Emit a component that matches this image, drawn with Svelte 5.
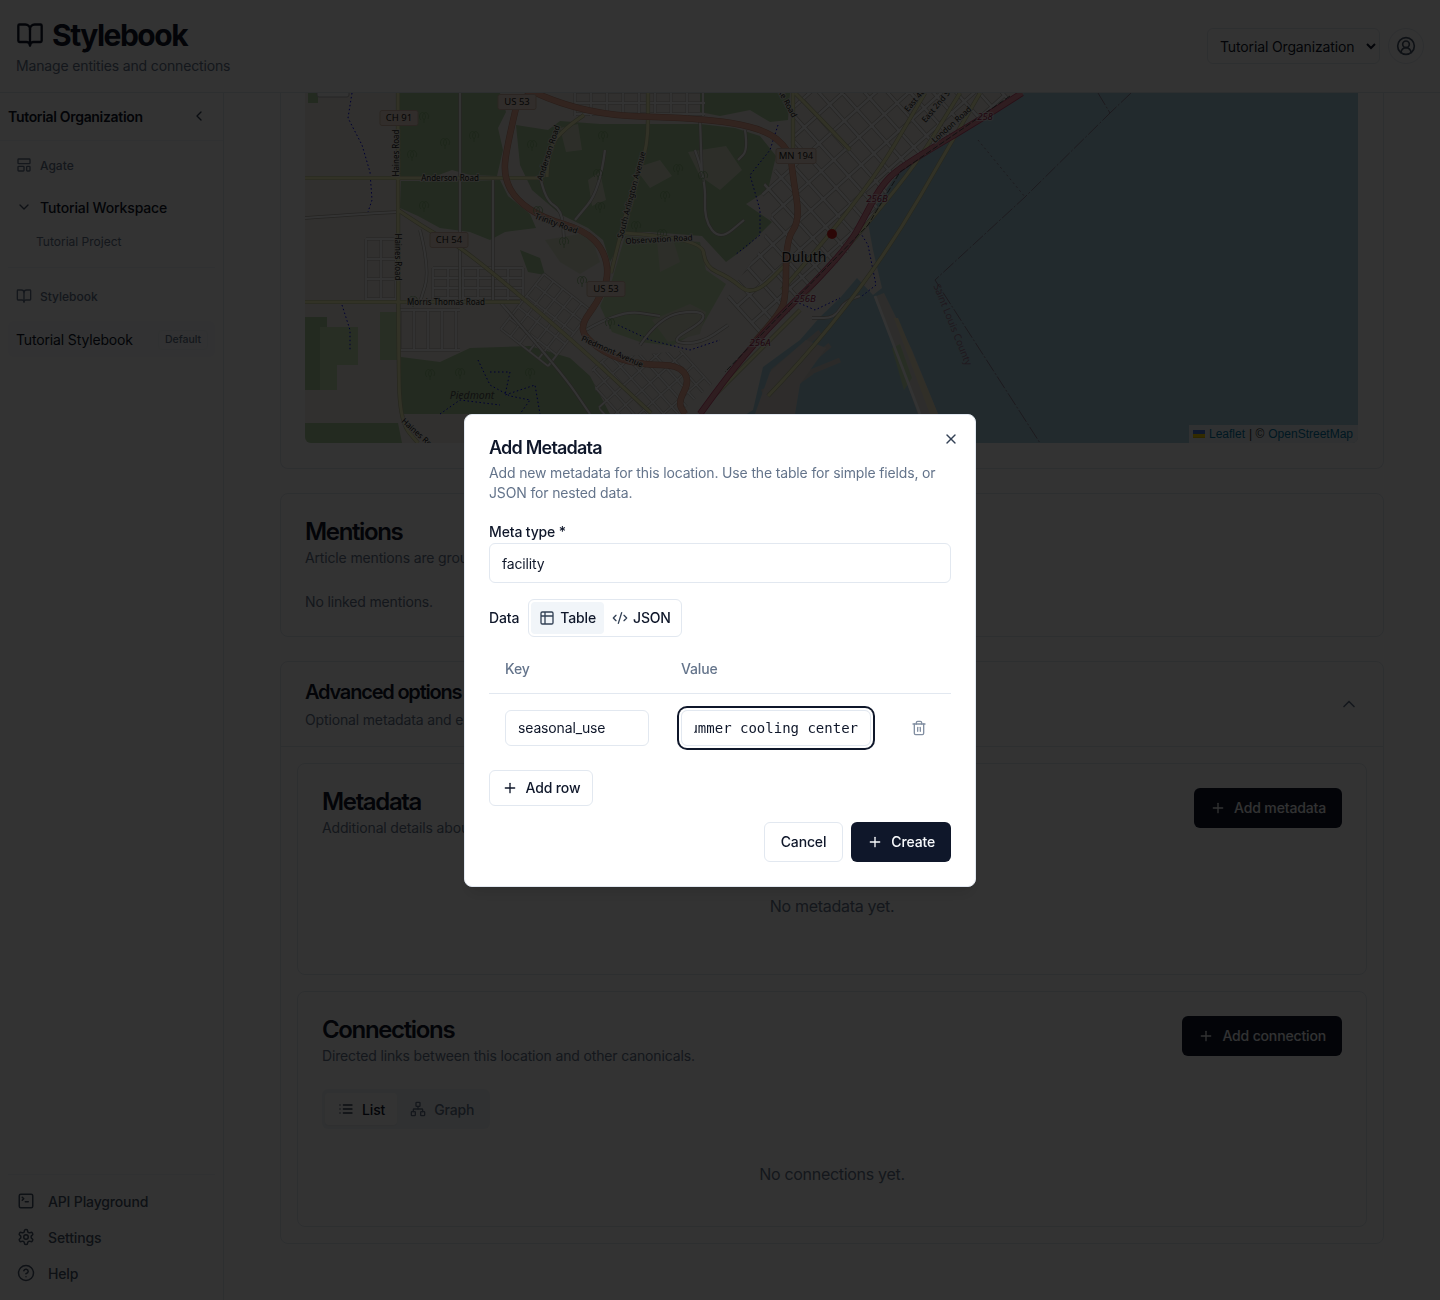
<script>
  import { onMount } from 'svelte';

  const ICONS = {
    book: ['M12 7v14', 'M3 18a1 1 0 0 1-1-1V4a1 1 0 0 1 1-1h5a4 4 0 0 1 4 4 4 4 0 0 1 4-4h5a1 1 0 0 1 1 1v13a1 1 0 0 1-1 1h-6a3 3 0 0 0-3 3 3 3 0 0 0-3-3z'],
    layout: ['M4 3h16a1 1 0 0 1 1 1v5a1 1 0 0 1-1 1H4a1 1 0 0 1-1-1V4a1 1 0 0 1 1-1z', 'M4 14h7a1 1 0 0 1 1 1v5a1 1 0 0 1-1 1H4a1 1 0 0 1-1-1v-5a1 1 0 0 1 1-1z', 'M17 14h3a1 1 0 0 1 1 1v5a1 1 0 0 1-1 1h-3a1 1 0 0 1-1-1v-5a1 1 0 0 1 1-1z'],
    left: ['m15 18-6-6 6-6'],
    down: ['m6 9 6 6 6-6'],
    up: ['m18 15-6-6-6 6'],
    table: ['M9 3H5a2 2 0 0 0-2 2v4m6-6h10a2 2 0 0 1 2 2v4M9 3v18m0 0h10a2 2 0 0 0 2-2V9M9 21H5a2 2 0 0 1-2-2V9m0 0h18'],
    code: ['m18 16 4-4-4-4', 'm6 8-4 4 4 4', 'm14.5 4-5 16'],
    trash: ['M3 6h18', 'M19 6v14c0 1-1 2-2 2H7c-1 0-2-1-2-2V6', 'M8 6V4c0-1 1-2 2-2h4c1 0 2 1 2 2v2', 'M10 11v6', 'M14 11v6'],
    plus: ['M5 12h14', 'M12 5v14'],
    x: ['M18 6 6 18', 'm6 6 12 12'],
    terminal: ['m7 11 2-2-2-2', 'M11 13h4', 'M5 3h14a2 2 0 0 1 2 2v14a2 2 0 0 1-2 2H5a2 2 0 0 1-2-2V5a2 2 0 0 1 2-2z'],
    gear: ['M12.22 2h-.44a2 2 0 0 0-2 2v.18a2 2 0 0 1-1 1.73l-.43.25a2 2 0 0 1-2 0l-.15-.08a2 2 0 0 0-2.73.73l-.22.38a2 2 0 0 0 .73 2.73l.15.1a2 2 0 0 1 1 1.72v.51a2 2 0 0 1-1 1.74l-.15.09a2 2 0 0 0-.73 2.73l.22.38a2 2 0 0 0 2.73.73l.15-.08a2 2 0 0 1 2 0l.43.25a2 2 0 0 1 1 1.73V20a2 2 0 0 0 2 2h.44a2 2 0 0 0 2-2v-.18a2 2 0 0 1 1-1.73l.43-.25a2 2 0 0 1 2 0l.15.08a2 2 0 0 0 2.73-.73l.22-.39a2 2 0 0 0-.73-2.73l-.15-.08a2 2 0 0 1-1-1.74v-.5a2 2 0 0 1 1-1.74l.15-.09a2 2 0 0 0 .73-2.73l-.22-.38a2 2 0 0 0-2.73-.73l-.15.08a2 2 0 0 1-2 0l-.43-.25a2 2 0 0 1-1-1.73V4a2 2 0 0 0-2-2z', 'M12 9a3 3 0 1 0 0 6 3 3 0 0 0 0-6z'],
    help: ['M12 2a10 10 0 1 0 0 20 10 10 0 0 0 0-20z', 'M9.09 9a3 3 0 0 1 5.83 1c0 2-3 3-3 3', 'M12 17h.01'],
    list: ['M3 12h.01', 'M3 18h.01', 'M3 6h.01', 'M8 12h13', 'M8 18h13', 'M8 6h13'],
    network: ['M17 16h4a1 1 0 0 1 1 1v4a1 1 0 0 1-1 1h-4a1 1 0 0 1-1-1v-4a1 1 0 0 1 1-1z', 'M3 16h4a1 1 0 0 1 1 1v4a1 1 0 0 1-1 1H3a1 1 0 0 1-1-1v-4a1 1 0 0 1 1-1z', 'M10 2h4a1 1 0 0 1 1 1v4a1 1 0 0 1-1 1h-4a1 1 0 0 1-1-1V3a1 1 0 0 1 1-1z', 'M5 16v-3a1 1 0 0 1 1-1h12a1 1 0 0 1 1 1v3', 'M12 12V8'],
    user: ['M18 20a6 6 0 0 0-12 0', 'M12 6a4 4 0 1 0 0 8 4 4 0 0 0 0-8z', 'M12 2a10 10 0 1 0 0 20 10 10 0 0 0 0-20z']
  };

  // rounds a list of points into a road line
  function smooth(pts) {
    let d = `M${pts[0][0]} ${pts[0][1]}`;
    for (let i = 1; i < pts.length - 1; i++) {
      const mx = (pts[i][0] + pts[i + 1][0]) / 2;
      const my = (pts[i][1] + pts[i + 1][1]) / 2;
      d += ` Q${pts[i][0]} ${pts[i][1]} ${mx} ${my}`;
    }
    const last = pts[pts.length - 1];
    return d + ` L${last[0]} ${last[1]}`;
  }

  // block of streets, turned by angle around its centre
  function grid(cx, cy, angle, w, h, sx, sy) {
    const a = (angle * Math.PI) / 180;
    const p = (x, y) => `${(cx + x * Math.cos(a) - y * Math.sin(a)).toFixed(1)} ${(cy + x * Math.sin(a) + y * Math.cos(a)).toFixed(1)}`;
    let d = '';
    for (let x = -w / 2; x <= w / 2; x += sx) d += `M${p(x, -h / 2)}L${p(x, h / 2)}`;
    for (let y = -h / 2; y <= h / 2; y += sy) d += `M${p(-w / 2, y)}L${p(w / 2, y)}`;
    return d;
  }

  const forests = [
    'M400 93L500 93 506 112 498 128 503 150 497 176 470 175 452 170 436 176 400 176Z',
    'M401 181L470 181 500 180 508 196 530 214 536 228 505 232 490 240 470 232 440 228 418 216 400 208Z',
    'M516 125L548 130 560 121 600 124 650 124 700 124 735 128 760 136 776 156 768 190 746 204 772 222 748 246 726 262 702 236 650 232 626 232 610 262 603 240 588 228 560 214 532 190 520 165Z',
    'M401 357L440 362 470 348 530 346 570 358 590 376 610 414 401 414Z',
    'M305 423L398 423 402 443 305 443Z',
    'M305 317L327 317 327 390 305 390Z',
    'M308 93L318 93 318 103 308 103Z',
    'M700 93L790 93 788 120 770 122 750 110 720 116 700 112Z',
    'M520 250L540 258 545 275 528 272Z'
  ];
  const parks = [
    'M625 236L700 242 706 270 726 284 700 330 672 346 640 342 612 332 600 306 612 280Z',
    'M320 327L358 327 358 365 337 365 337 390 320 390Z',
    'M380 312L398 312 398 360 380 360Z'
  ];

  const clearings = [
    'M657 240L672 236 680 262 660 272Z',
    'M635 168L660 160 672 176 650 188Z',
    'M560 128L578 124 582 150 566 152Z',
    'M688 152L726 146 742 170 720 190 700 176Z',
    'M652 320L690 304 706 312 700 334 668 342Z',
    'M588 180L600 172 606 200 592 206Z',
    'M545 240L590 232 600 262 580 274 560 262Z'
  ];

  const blocks = [
    { d: grid(870, 200, -42, 340, 240, 17, 22), clip: 'url(#city)' },
    { d: grid(640, 104, 0, 130, 24, 16, 11), thin: true },
    { d: grid(381, 270, 0, 30, 62, 15, 20), thin: true },
    { d: grid(478, 285, 0, 90, 34, 15, 10), thin: true },
    { d: grid(546, 320, 38, 60, 70, 12, 14), thin: true },
    { d: grid(640, 388, -42, 110, 90, 11, 16), clip: 'url(#south)', thin: true },
    { d: grid(430, 330, 0, 60, 40, 14, 40), thin: true }
  ];

  const minor = [
    [[305, 218], [360, 214], [398, 212]],
    [[305, 178], [398, 178]],
    [[460, 93], [460, 300]],
    [[493, 178], [493, 302]],
    [[605, 150], [600, 190], [575, 220]],
    [[695, 150], [706, 180], [704, 220], [720, 240], [744, 220]],
    [[700, 118], [702, 178]],
    [[640, 345], [660, 316], [700, 310], [706, 320], [668, 342], [700, 344], [728, 325]],
    [[586, 330], [620, 310], [660, 316]],
    [[540, 176], [545, 200], [562, 210], [564, 240]],
    [[745, 130], [748, 150], [738, 160]],
    [[420, 230], [430, 270], [420, 302]],
    [[500, 302], [560, 370], [590, 414]],
    [[860, 296], [845, 300], [835, 318], [812, 318]]
  ];
  const tertiary = [
    [[398, 93], [398, 363], [401, 423], [418, 443]],
    [[305, 178], [543, 178]],
    [[305, 302], [520, 302]],
    [[398, 210], [432, 233], [462, 247], [570, 338], [651, 413]],
    [[624, 233], [702, 238], [705, 267], [729, 277], [753, 297], [790, 260]],
    [[611, 273], [621, 233], [634, 183], [648, 147], [648, 93]],
    [[547, 177], [548, 147], [567, 127], [584, 115]],
    [[793, 93], [793, 150]],
    [[768, 396], [860, 300], [980, 93]],
    [[800, 300], [900, 190], [960, 93]],
    [[782, 290], [865, 195], [925, 93]],
    [[795, 93], [820, 118], [850, 150]],
    [[710, 400], [800, 310]]
  ];
  const trunk = [
    [[536, 93], [584, 115], [699, 118], [763, 128], [790, 150], [793, 177], [800, 220], [786, 240], [786, 297], [780, 313], [752, 345]],
    [[516, 108], [506, 150], [504, 177], [516, 200], [543, 218], [584, 230], [604, 250], [609, 277], [597, 303], [582, 323], [584, 337], [611, 357], [645, 365], [678, 365], [690, 380], [678, 403], [685, 414]],
    [[516, 108], [524, 96], [536, 93]]
  ];
  const motorway = [[[1022, 93], [980, 120], [900, 167], [880, 187], [863, 220], [850, 243], [820, 277], [793, 303], [760, 337], [727, 377], [700, 414]]];

  const streams = [
    'M352 93L348 118 362 145 370 172 372 200 368 212',
    'M342 305L350 330 350 350',
    'M778 125L770 150 750 175 760 210 760 235 735 255',
    'M478 360L490 385 510 396 530 400 520 414',
    'M440 414L460 400 500 405',
    'M490 372L510 372 505 395 535 385 540 414',
    'M618 325L650 340 690 350 720 340',
    'M860 232L868 245 876 285 862 296',
    'M792 300L815 310 840 298'
  ];

  const trees = [
    [424, 116], [445, 142], [474, 135], [412, 154], [424, 205], [532, 144], [538, 210], [598, 173], [600, 206], [564, 241], [603, 135],
    [665, 195], [678, 168], [636, 225], [703, 175], [662, 233], [413, 300], [430, 373], [460, 372], [530, 372], [610, 322], [582, 280]
  ];

  const shields = [
    { x: 399, y: 118, w: 38, t: 'CH 91' },
    { x: 517, y: 102, w: 38, t: 'US 53' },
    { x: 449, y: 240, w: 38, t: 'CH 54' },
    { x: 606, y: 289, w: 38, t: 'US 53' },
    { x: 796, y: 156, w: 40, t: 'MN 194' }
  ];

  const labels = [
    { t: 'Haines Road', x: 397, y: 153, r: -90 },
    { t: 'Haines Road', x: 397, y: 257, r: 90 },
    { t: 'Anderson Road', x: 450, y: 179 },
    { t: 'Anderson Road', x: 549, y: 153, r: -72 },
    { t: 'Morris Thomas Road', x: 446, y: 303 },
    { t: 'Trinity Road', x: 556, y: 224, r: 20 },
    { t: 'South Arlington Avenue', x: 632, y: 195, r: -75 },
    { t: 'Observation Road', x: 659, y: 240, r: -3 },
    { t: 'Piedmont Avenue', x: 612, y: 352, r: 24 },
    { t: 'Haines Road', x: 420, y: 436, r: 42 },
    { t: 'London Road', x: 952, y: 125, r: -42 },
    { t: 'East 4th Street', x: 924, y: 90, r: -50 },
    { t: 'East 2nd Street', x: 942, y: 100, r: -50 },
    { t: 'Lake Road', x: 785, y: 100, r: 62 }
  ];
  const exits = [
    { t: '258', x: 985, y: 117 },
    { t: '256B', x: 877, y: 199 },
    { t: '256B', x: 805, y: 299 },
    { t: '256A', x: 760, y: 343 }
  ];

  let valueInput = $state();
  let metaType = $state('facility');
  let keyValue = $state('seasonal_use');
  let valueValue = $state('Summer cooling center');
  let org = $state('Tutorial Organization');

  onMount(() => {
    // long value sits scrolled to its end, as after typing
    valueInput.scrollLeft = valueInput.scrollWidth;
  });
</script>

{#snippet icon(name, size = 16)}
  <svg class="icon" width={size} height={size} viewBox="0 0 24 24" fill="none" stroke="currentColor" stroke-width="2" stroke-linecap="round" stroke-linejoin="round">
    {#each ICONS[name] as d}<path {d} />{/each}
  </svg>
{/snippet}

<div class="page">
  <header class="top">
    <div>
      <div class="brand">
        {@render icon('book', 28)}
        <h1>Stylebook</h1>
      </div>
      <p class="tagline">Manage entities and connections</p>
    </div>
    <div class="top-right">
      <select class="org-select" bind:value={org}>
        <option>Tutorial Organization</option>
      </select>
      <button class="avatar">{@render icon('user', 20)}</button>
    </div>
  </header>

  <div class="body">
    <aside class="side">
      <div class="side-head">
        <span>Tutorial Organization</span>
        <span class="collapse">{@render icon('left', 16)}</span>
      </div>
      <div class="side-nav">
        <div class="side-label first">{@render icon('layout', 16)}<span>Agate</span></div>
        <div class="workspace">{@render icon('down', 16)}<span>Tutorial Workspace</span></div>
        <div class="project">Tutorial Project</div>
        <div class="rule"></div>
        <div class="side-label second">{@render icon('book', 16)}<span>Stylebook</span></div>
        <div class="current">
          <span>Tutorial Stylebook</span>
          <span class="badge">Default</span>
        </div>
      </div>
      <div class="side-foot">
        <div class="foot-link">{@render icon('terminal', 18)}<span>API Playground</span></div>
        <div class="foot-link">{@render icon('gear', 18)}<span>Settings</span></div>
        <div class="foot-link">{@render icon('help', 18)}<span>Help</span></div>
      </div>
    </aside>

    <main class="main">
      <section class="card map-card">
        <div class="map">
          <svg class="tiles" viewBox="305 93 1053 350" width="1053" height="350">
            <defs>
              <clipPath id="city"><path d="M796 93L1024 93 900 170 866 225 850 250 790 312 752 345 700 414 660 414 700 345 735 285 760 250 772 215 760 190 790 150Z" /></clipPath>
              <clipPath id="south"><path d="M590 360L690 350 720 380 680 414 600 414Z" /></clipPath>
            </defs>
            <rect x="305" y="93" width="1053" height="350" fill="#f2efe9" />
            <rect x="305" y="423" width="93" height="2" fill="#e4e0d8" />
            {#each forests as d}<path {d} class="forest" />{/each}
            {#each parks as d}<path {d} class="park" />{/each}
            {#each clearings as d}<path {d} class="clearing" />{/each}
            <path class="water" d="M1024 93L1358 93 1358 443 700 443 753 410 763 367 800 340 820 317 840 298 857 278 873 295 882 288 873 250 868 223 880 198 900 170 925 152 960 130 1000 106Z" />
            <path class="pier" d="M772 372L820 332M784 384L830 345M762 392L840 360M770 402L812 372" />
            <path class="dock" d="M755 414L770 372 806 340 826 348 800 384 795 414Z" />
            <path class="strip" d="M874 297L884 293 912 350 938 414 918 414 895 350Z" />
            <path class="sand" d="M894 318L898 318 938 414 930 414Z" />
            <path class="park" d="M892 348L900 344 912 378 904 390Z" />

            {#each blocks as b}
              <g clip-path={b.clip} class:thin={b.thin}>
                <path d={b.d} class="street-case" />
                <path d={b.d} class="street" />
              </g>
            {/each}
            <path class="street" d="M875 296L920 414" />

            {#each streams as d}<path {d} class="stream" />{/each}
            {#each minor as pts}<path d={smooth(pts)} class="minor-case" />{/each}
            {#each minor as pts}<path d={smooth(pts)} class="minor" />{/each}
            {#each tertiary as pts}<path d={smooth(pts)} class="tert-case" />{/each}
            {#each tertiary as pts}<path d={smooth(pts)} class="tert" />{/each}
            {#each trunk as pts}<path d={smooth(pts)} class="trunk-case" />{/each}
            {#each trunk as pts}<path d={smooth(pts)} class="trunk" />{/each}
            {#each motorway as pts}<path d={smooth(pts)} class="moto-case" />{/each}
            {#each motorway as pts}<path d={smooth(pts)} class="moto" />{/each}
            <path class="rail" d="M1010 96L900 172 868 225 790 305 725 372" />

            <path class="boundary" d="M1098 93L1110 113 1025 197 935 280 1040 443M1131 93L1110 113" />
            <path class="boundary dotted" d="M978 140L1025 197" />

            {#each trees as [x, y]}
              <path class="tree" d="M{x - 3} {y + 4}a3 4 0 1 1 3 0v3m0-3a3 4 0 1 1 4 -1" />
            {/each}

            {#each labels as l}
              <text class="road-label" x={l.x} y={l.y} text-anchor="middle" dominant-baseline="middle" transform={l.r ? `rotate(${l.r} ${l.x} ${l.y})` : undefined}>{l.t}</text>
            {/each}
            {#each exits as l}
              <text class="exit" x={l.x} y={l.y} text-anchor="middle" dominant-baseline="middle">{l.t}</text>
            {/each}
            {#each shields as s}
              <rect class="shield" x={s.x - s.w / 2} y={s.y - 7.5} width={s.w} height="15" rx="2" />
              <text class="shield-text" x={s.x} y={s.y} text-anchor="middle" dominant-baseline="middle">{s.t}</text>
            {/each}
            <text class="place" x="804" y="258" text-anchor="middle" dominant-baseline="middle">Duluth</text>
            <text class="suburb" x="472" y="396" text-anchor="middle" dominant-baseline="middle">Piedmont</text>
            <text class="county" x="952" y="325" text-anchor="middle" dominant-baseline="middle" transform="rotate(68 952 325)">Saint Louis County</text>
            <rect x="317" y="88" width="32" height="9" rx="2" class="zoom-box" />
            <circle cx="832" cy="234" r="5" class="marker" />
          </svg>
          <div class="attribution">
            <svg width="12" height="8" viewBox="0 0 12 8"><rect width="12" height="4" fill="#4C7BE1" /><rect y="4" width="12" height="3" fill="#FFD500" /><rect y="7" width="12" height="1" fill="#E0BC00" /></svg>
            <span class="link">Leaflet</span> | © <span class="link">OpenStreetMap</span>
          </div>
        </div>
      </section>

      <section class="card plain">
        <h2>Mentions</h2>
        <p class="muted">Article mentions are grouped by article and linked to this location.</p>
        <p class="muted none">No linked mentions.</p>
      </section>

      <section class="card advanced">
        <div class="adv-head">
          <div>
            <h3>Advanced options</h3>
            <p class="muted">Optional metadata and entity connections.</p>
          </div>
          <span class="adv-toggle">{@render icon('up', 20)}</span>
        </div>
        <div class="adv-body">
          <div class="inner meta-inner">
            <div class="inner-head">
              <div>
                <h2>Metadata</h2>
                <p class="muted">Additional details about this location.</p>
              </div>
              <button class="btn primary">{@render icon('plus', 16)}<span>Add metadata</span></button>
            </div>
            <p class="empty meta-empty">No metadata yet.</p>
          </div>
          <div class="inner conn-inner">
            <div class="inner-head">
              <div>
                <h2>Connections</h2>
                <p class="muted">Directed links between this location and other canonicals.</p>
              </div>
              <button class="btn primary">{@render icon('plus', 16)}<span>Add connection</span></button>
            </div>
            <div class="tabs">
              <div class="tab on">{@render icon('list', 16)}<span>List</span></div>
              <div class="tab">{@render icon('network', 16)}<span>Graph</span></div>
            </div>
            <p class="empty conn-empty">No connections yet.</p>
          </div>
        </div>
      </section>
    </main>
  </div>
</div>

<div class="overlay">
  <div class="dialog">
    <button class="close">{@render icon('x', 16)}</button>
    <h4>Add Metadata</h4>
    <p class="dialog-desc">Add new metadata for this location. Use the table for simple fields, or JSON for nested data.</p>

    <label class="field-label" for="meta-type">Meta type *</label>
    <input id="meta-type" class="input wide" bind:value={metaType} />

    <div class="data-row">
      <span class="data-label">Data</span>
      <div class="switch">
        <div class="switch-item on">{@render icon('table', 16)}<span>Table</span></div>
        <div class="switch-item">{@render icon('code', 16)}<span>JSON</span></div>
      </div>
    </div>

    <div class="kv head">
      <span>Key</span>
      <span>Value</span>
      <span></span>
    </div>
    <div class="kv row">
      <div><input class="input key" bind:value={keyValue} /></div>
      <div><input class="input value" bind:this={valueInput} bind:value={valueValue} /></div>
      <button class="trash">{@render icon('trash', 16)}</button>
    </div>

    <button class="btn outline small">{@render icon('plus', 16)}<span>Add row</span></button>

    <div class="dialog-foot">
      <button class="btn outline">Cancel</button>
      <button class="btn primary create">{@render icon('plus', 16)}<span>Create</span></button>
    </div>
  </div>
</div>

<style>
  :global(body) { margin: 0; background: #fff; font-family: Inter, "Noto Sans", sans-serif; color: #0f172a; letter-spacing: -0.15px; }
  h1, h2, h3, h4, p { margin: 0; }
  button { font: inherit; letter-spacing: inherit; color: inherit; background: none; border: 0; padding: 0; }
  .icon { display: block; flex: none; }

  .page { height: 1300px; display: flex; flex-direction: column; overflow: hidden; background: #fff; }
  .top { height: 92px; flex: none; border-bottom: 1px solid #e2e8f0; padding: 0 16px; display: flex; align-items: center; justify-content: space-between; }
  .brand { display: flex; align-items: center; gap: 8px; height: 36px; }
  h1 { font-size: 30px; line-height: 36px; font-weight: 700; letter-spacing: -1.5px; }
  .tagline { font-size: 14px; line-height: 20px; color: #64748b; margin-top: 3px; }
  .top-right { display: flex; align-items: center; gap: 8px; }
  .org-select { width: 173px; height: 36px; border: 1px solid #e2e8f0; border-radius: 6px; background: #fff; padding: 0 4px 0 8px; font: 14px Inter, sans-serif; letter-spacing: -0.14px; color: #0f172a; }
  .avatar { width: 36px; height: 36px; border: 1px solid #e2e8f0; border-radius: 50%; display: flex; align-items: center; justify-content: center; color: #475569; }

  .body { flex: 1; display: flex; min-height: 0; }
  .side { width: 223px; flex: none; border-right: 1px solid #e2e8f0; display: flex; flex-direction: column; }
  .side-head { height: 48px; box-sizing: border-box; flex: none; padding: 0 16px 1px 8px; border-bottom: 1px solid #f1f5f9; display: flex; align-items: center; justify-content: space-between; font-size: 14px; font-weight: 600; letter-spacing: -0.32px; }
  .collapse { color: #334155; }
  .side-nav { padding: 0 8px; }
  .side-label { display: flex; align-items: center; gap: 8px; height: 20px; padding-left: 8px; font-size: 12px; font-weight: 500; color: #64748b; letter-spacing: 0; }
  .side-label.first { margin-top: 14px; }
  .side-label.second { margin-top: 18px; }
  .workspace { display: flex; align-items: center; gap: 8px; height: 32px; margin-top: 16px; padding-left: 8px; font-size: 14px; font-weight: 500; }
  .workspace .icon { color: #475569; }
  .project { height: 28px; line-height: 28px; margin-top: 5px; padding-left: 28px; font-size: 12px; color: #64748b; letter-spacing: 0; }
  .rule { height: 1px; background: #f1f5f9; margin-top: 11px; }
  .current { height: 36px; box-sizing: border-box; margin-top: 15px; padding: 1px 7px 0 8px; border-radius: 6px; background: #f8fafc; display: flex; align-items: center; justify-content: space-between; font-size: 14px; font-weight: 400; }
  .badge { width: 50px; height: 20px; box-sizing: border-box; border: 1px solid #f1f5f9; border-radius: 4px; text-align: center; font-size: 10.5px; line-height: 18px; font-weight: 500; color: #64748b; letter-spacing: 0; }
  .side-foot { margin: auto 8px 0; border-top: 1px solid #f1f5f9; padding: 8px 0 9px; }
  .foot-link { height: 36px; display: flex; align-items: center; gap: 13px; padding-left: 9px; font-size: 14px; font-weight: 500; color: #475569; }

  .main { flex: 1; min-width: 0; padding: 0 56px; overflow: hidden; display: flex; flex-direction: column; gap: 24px; }
  .card { border: 1px solid #e2e8f0; border-radius: 8px; background: #fff; flex: none; }
  .map-card { border-top: 0; border-radius: 0 0 8px 8px; padding: 0 25px 25px 24px; }
  .map { position: relative; height: 350px; overflow: hidden; border-radius: 0 0 6px 6px; background: #f2efe9; }
  .tiles { display: block; letter-spacing: 0; }
  .attribution { position: absolute; right: 0; bottom: 0; height: 18px; padding: 0 5px 0 4px; display: flex; align-items: center; gap: 4px; background: rgba(255, 255, 255, 0.8); font: 12px/18px "Liberation Sans", Arial, sans-serif; letter-spacing: 0; color: #333; }
  .link { color: #0078a8; }

  .forest { fill: #add19e; }
  .park { fill: #c8e6b4; }
  .clearing { fill: #dfe7cd; }
  .water { fill: #aad3df; }
  .dock { fill: #e3ddd8; }
  .strip { fill: #e6e2da; }
  .sand { fill: #f5e9c6; }
  .pier { fill: none; stroke: #d8d3cd; stroke-width: 5; }
  .street-case, .minor-case { fill: none; stroke: #b4aea6; stroke-width: 3.8; }
  .street { fill: none; stroke: #fff; stroke-width: 2.6; }
  .thin .street-case { stroke: #bdb7af; stroke-width: 2.8; }
  .thin .street { stroke-width: 1.8; }
  .minor { fill: none; stroke: #fff; stroke-width: 2.2; }
  .minor-case { stroke-width: 3.4; }
  .tert-case { fill: none; stroke: #b9ba92; stroke-width: 4.2; stroke-linejoin: round; }
  .tert { fill: none; stroke: #f7fabf; stroke-width: 3; stroke-linejoin: round; }
  .trunk-case { fill: none; stroke: #c98d76; stroke-width: 6.5; stroke-linejoin: round; }
  .trunk { fill: none; stroke: #f9b29c; stroke-width: 5.5; stroke-linejoin: round; }
  .moto-case { fill: none; stroke: #c8476f; stroke-width: 6.5; stroke-linejoin: round; }
  .moto { fill: none; stroke: #e892a2; stroke-width: 5; stroke-linejoin: round; }
  .rail { fill: none; stroke: #555; stroke-width: 1; stroke-dasharray: 6 2; }
  .stream { fill: none; stroke: #0000ff; stroke-width: 1; stroke-dasharray: 1.5 2.5; }
  .boundary { fill: none; stroke: #8f7f95; stroke-width: 1; stroke-dasharray: 14 2 2 2; }
  .boundary.dotted { stroke-dasharray: 2 3; }
  .tree { fill: none; stroke: #8cb87c; stroke-width: 0.8; }
  .road-label { font: 8px "Noto Sans", sans-serif; fill: #222; paint-order: stroke; stroke: rgba(242, 239, 233, 0.8); stroke-width: 2px; }
  .exit { font: italic 9.5px "Noto Sans", sans-serif; fill: #a0214e; paint-order: stroke; stroke: rgba(255, 255, 255, 0.6); stroke-width: 2px; }
  .shield { fill: #f6e2d5; stroke: #d5bba8; stroke-width: 1; }
  .shield-text { font: 9.5px "Noto Sans", sans-serif; fill: #222; }
  .place { font: 14px "Noto Sans", sans-serif; fill: #111; paint-order: stroke; stroke: rgba(255, 255, 255, 0.7); stroke-width: 2px; }
  .suburb { font: italic 10.5px "Noto Sans", sans-serif; fill: #555; }
  .county { font: 10px "Noto Sans", sans-serif; fill: #a07a96; }
  .zoom-box { fill: #fff; stroke: #b7b7b7; }
  .marker { fill: #dc2626; }

  h2 { font-size: 24px; line-height: 28px; font-weight: 600; letter-spacing: -1.35px; }
  h3 { font-size: 20px; line-height: 28px; font-weight: 600; letter-spacing: -1.2px; white-space: nowrap; }
  .muted { font-size: 14px; line-height: 20px; color: #64748b; }
  h2 + .muted { margin-top: 2px; }
  h3 + .muted { margin-top: 4px; }
  .plain { padding: 24px 24px 0; height: 118px; }
  .none { margin-top: 24px; }

  .adv-head { height: 85px; box-sizing: border-box; padding: 16px 24px; border-bottom: 1px solid #e2e8f0; display: flex; justify-content: space-between; align-items: center; }
  .adv-head > div { align-self: flex-start; }
  .adv-toggle { color: #64748b; }
  .adv-body { padding: 16px; display: flex; flex-direction: column; gap: 16px; }
  .inner { border: 1px solid #e2e8f0; border-radius: 8px; padding: 24px; }
  .inner-head { display: flex; justify-content: space-between; align-items: flex-start; }
  .empty { text-align: center; font-size: 16px; line-height: 24px; color: #64748b; letter-spacing: -0.3px; }
  .meta-inner { height: 162px; }
  .meta-empty { margin-top: 56px; }
  .conn-inner { height: 186px; }
  .conn-empty { margin-top: 33px; }

  .btn { display: inline-flex; align-items: center; justify-content: center; gap: 8px; height: 40px; box-sizing: border-box; border-radius: 6px; font-size: 14px; font-weight: 500; padding: 0 16px 1px; }
  .primary { background: #0f172a; color: #f8fafc; }
  .tabs { display: inline-flex; margin-top: 23px; padding: 4px 4px 4px 3px; height: 40px; box-sizing: border-box; border-radius: 6px; background: #f1f5f9; }
  .tab { display: flex; align-items: center; gap: 8px; padding: 0 12px 0 13px; font-size: 14px; font-weight: 500; color: #64748b; border-radius: 4px; }
  .tab.on { background: #fff; color: #0f172a; box-shadow: 0 1px 2px rgba(0, 0, 0, 0.05); }
  .tab.on .icon { color: #334155; }

  .overlay { position: fixed; inset: 0; z-index: 50; background: rgba(0, 0, 0, 0.8); }
  .dialog { position: absolute; left: 464px; top: 414px; width: 512px; height: 473px; box-sizing: border-box; padding: 24px; border: 1px solid #e2e8f0; border-radius: 8px; background: #fff; box-shadow: 0 10px 15px -3px rgba(0, 0, 0, 0.1), 0 4px 6px -4px rgba(0, 0, 0, 0.1); display: flex; flex-direction: column; font-size: 14px; }
  .close { position: absolute; right: 16px; top: 16px; color: #334155; }
  h4 { font-size: 18px; line-height: 18px; font-weight: 600; letter-spacing: -0.78px; }
  .dialog-desc { font-size: 14px; line-height: 20px; color: #64748b; margin-top: 6px; }
  .field-label { font-weight: 500; line-height: 14px; margin-top: 22px; }
  .input { box-sizing: border-box; height: 40px; border: 1px solid #e2e8f0; border-radius: 6px; background: #fff; padding: 0 12px; font: 14px Inter, sans-serif; letter-spacing: -0.15px; color: #0f172a; outline: none; }
  .wide { width: 100%; margin-top: 4px; flex: none; }
  .data-row { display: flex; align-items: center; gap: 8px; margin-top: 16px; height: 38px; flex: none; }
  .data-label { font-weight: 500; margin-top: -2px; margin-right: 1px; }
  .switch { display: flex; height: 38px; box-sizing: border-box; padding: 2px; border: 1px solid #e2e8f0; border-radius: 6px; }
  .switch-item { display: flex; align-items: center; gap: 5px; padding: 0 8px 1px; height: 32px; box-sizing: border-box; border-radius: 4px; font-weight: 500; color: #0f172a; }
  .switch-item .icon { color: #334155; }
  .switch-item.on { background: #f1f5f9; }
  .kv { display: grid; grid-template-columns: 176px 222px 64px; }
  .kv.head { margin-top: 8px; height: 49px; box-sizing: border-box; padding-bottom: 2px; align-items: center; border-bottom: 1px solid #e2e8f0; font-weight: 500; color: #64748b; flex: none; }
  .kv.head span { padding-left: 16px; }
  .kv.row { padding: 16px 0 24px; align-items: center; flex: none; }
  .kv.row > div { padding-left: 16px; }
  .key { width: 144px; height: 36px; padding-bottom: 2px; }
  .value { width: 190px; height: 36px; font: 14px "DejaVu Sans Mono", monospace; letter-spacing: 0; box-shadow: 0 0 0 2px #fff, 0 0 0 4px #0f172a; }
  .trash { justify-self: center; color: #64748b; opacity: 0.8; }
  .small { height: 36px; width: 104px; padding: 0 0 1px; gap: 8px; flex: none; }
  .outline { border: 1px solid #e2e8f0; background: #fff; color: #0f172a; }
  .dialog-foot { display: flex; justify-content: flex-end; gap: 8px; margin-top: 16px; }
</style>
